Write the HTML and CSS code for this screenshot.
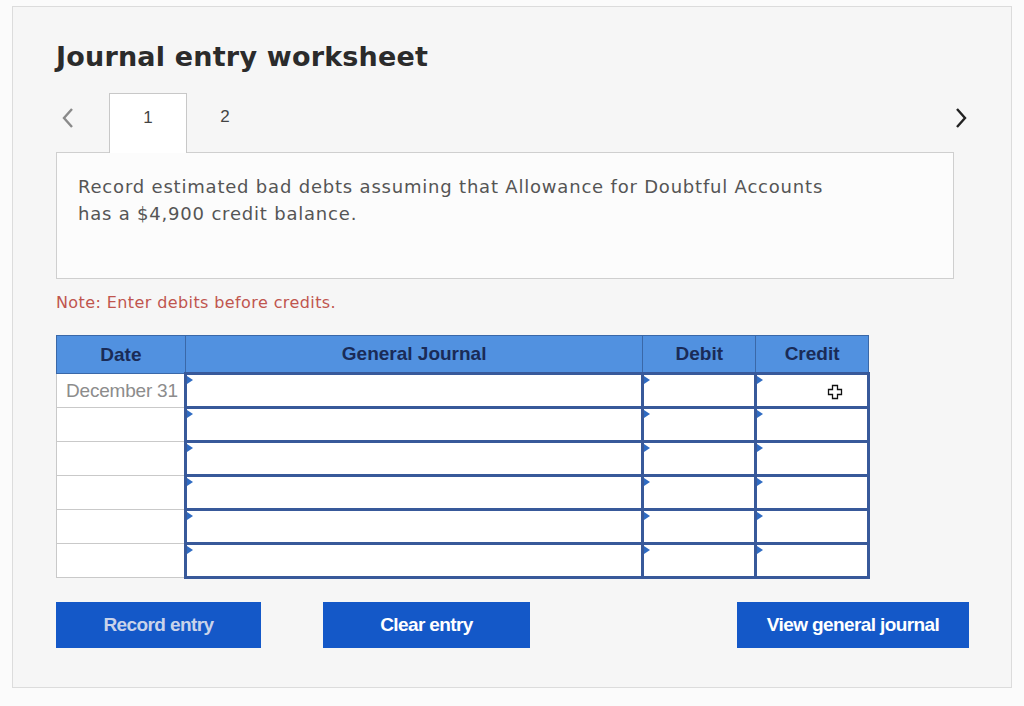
FILE: index.html
```html
<!DOCTYPE html>
<html lang="en">
  <head>
    <meta charset="UTF-8" />
    <title>Journal entry worksheet</title>
    <link rel="stylesheet" href="styles.css">
  </head>
  <body>
    <div id="panel">
      <h1 class="title">Journal entry worksheet</h1>

      <!-- タブ -->
      <div class="tabs">
        <span class="arrow arrow-left">
          <svg width="14" height="22" viewBox="0 0 14 22"><path d="M11 2 L3 11 L11 20" fill="none" stroke="#8a8a8a" stroke-width="2.4"/></svg>
        </span>
        <div class="tab active">1</div>
        <div class="tab">2</div>
        <span class="arrow arrow-right">
          <svg width="14" height="22" viewBox="0 0 14 22"><path d="M3 2 L11 11 L3 20" fill="none" stroke="#222" stroke-width="2.4"/></svg>
        </span>
      </div>

      <div class="question">
        <p>Record estimated bad debts assuming that Allowance for Doubtful Accounts<br />has a $4,900 credit balance.</p>
      </div>

      <p class="note">Note: Enter debits before credits.</p>

      <table class="journal">
        <thead>
          <tr>
            <th class="col-date">Date</th>
            <th class="col-account">General Journal</th>
            <th class="col-money">Debit</th>
            <th class="col-money">Credit</th>
          </tr>
        </thead>
        <tbody>
          <tr>
            <td class="date">December 31</td>
            <td class="input"></td>
            <td class="input"></td>
            <td class="input">
              <!-- カーソル -->
              <svg class="cursor" width="16" height="16" viewBox="0 0 16 16"><path d="M5.5 1.5 H10.5 V5.5 H14.5 V10.5 H10.5 V14.5 H5.5 V10.5 H1.5 V5.5 H5.5 Z" fill="#fff" stroke="#111" stroke-width="1.3"/></svg>
            </td>
          </tr>
          <tr><td class="date"></td><td class="input"></td><td class="input"></td><td class="input"></td></tr>
          <tr><td class="date"></td><td class="input"></td><td class="input"></td><td class="input"></td></tr>
          <tr><td class="date"></td><td class="input"></td><td class="input"></td><td class="input"></td></tr>
          <tr><td class="date"></td><td class="input"></td><td class="input"></td><td class="input"></td></tr>
          <tr><td class="date"></td><td class="input"></td><td class="input"></td><td class="input"></td></tr>
        </tbody>
      </table>

      <div class="buttons">
        <button class="btn btn-record">Record entry</button>
        <button class="btn btn-clear">Clear entry</button>
        <button class="btn btn-view">View general journal</button>
      </div>
    </div>
  </body>
</html>
```

FILE: styles.css
```css
html {
  height: 100%;
}
body {
  height: 100%;
  margin: 0;
  background-color: #fbfbfb;
  font-family: "DejaVu Sans", Verdana, sans-serif;
}

#panel {
  box-sizing: border-box;
  width: 1000px;
  height: 682px;
  margin: 6px 0 0 12px;
  padding: 0 43px;
  background-color: #f6f6f6;
  border: 1px solid #dcdcdc;
  display: flex;
  flex-direction: column;
}

.title {
  margin: 34px 0 0 0;
  font-size: 27px;
  font-weight: bold;
  color: #2b2b2b;
  letter-spacing: 0.2px;
}

/* タブ */
.tabs {
  display: flex;
  align-items: stretch;
  height: 59px;
  margin-top: 21px;
  width: 912px;
}
.arrow {
  display: flex;
  align-items: center;
  padding-bottom: 10px;
}
.arrow-left {
  width: 24px;
  margin-right: 29px;
  justify-content: center;
}
.arrow-right {
  margin-left: auto;
}
.tab {
  width: 76px;
  display: flex;
  justify-content: center;
  align-items: center;
  padding-bottom: 12px;
  font-family: "Liberation Sans", Arial, sans-serif;
  font-size: 17px;
  color: #444;
}
.tab.active {
  background-color: #fff;
  border: 1px solid #c8c8c8;
  border-bottom: none;
  margin-bottom: -1px;
  position: relative;
  z-index: 1;
}

.question {
  box-sizing: border-box;
  width: 898px;
  height: 127px;
  background-color: #fcfcfc;
  border: 1px solid #cfcfcf;
  padding: 20px 21px;
}
.question p {
  margin: 0;
  font-size: 18px;
  line-height: 27px;
  letter-spacing: 0.8px;
  color: #555;
}

.note {
  margin: 14px 0 0 0;
  font-size: 16px;
  letter-spacing: 0.4px;
  color: #c0554e;
}

/* 仕訳表 */
.journal {
  margin-top: 23px;
  width: 814px;
  border-collapse: collapse;
  font-family: "Liberation Sans", Arial, sans-serif;
}
.journal th {
  height: 36px;
  padding: 0;
  background-color: #5191e0;
  border: 1px solid #3a68a8;
  color: #1a2b57;
  font-size: 19px;
  font-weight: bold;
}
.col-date {
  width: 128px;
}
.col-account {
  width: 458px;
}
.col-money {
  width: 112px;
}
.journal td {
  height: 31px;
  padding: 0;
  background-color: #fff;
}
.journal td.date {
  border: 1px solid #c9c9c9;
  text-align: right;
  padding-right: 6px;
  font-size: 19px;
  letter-spacing: -0.2px;
  color: #8c8c8c;
}
.journal td.input {
  border: 3px solid #38599a;
  position: relative;
  text-align: right;
  padding-right: 24px;
}
/* 入力欄の三角マーカー */
.journal td.input::before {
  content: "";
  position: absolute;
  left: 0;
  top: 1px;
  border-left: 6px solid #2f6bc2;
  border-top: 4px solid transparent;
  border-bottom: 4px solid transparent;
}
.cursor {
  vertical-align: middle;
  margin-top: 2px;
}

.buttons {
  display: flex;
  align-items: center;
  margin-top: 23px;
  width: 913px;
}
.btn {
  height: 46px;
  border: none;
  background-color: #1458c8;
  color: #fff;
  font-family: "Liberation Sans", Arial, sans-serif;
  font-size: 19px;
  font-weight: bold;
  letter-spacing: -0.6px;
}
.btn-record {
  width: 205px;
  color: #c9d3ea;
}
.btn-clear {
  width: 207px;
  margin-left: 62px;
}
.btn-view {
  width: 232px;
  margin-left: auto;
}
```
